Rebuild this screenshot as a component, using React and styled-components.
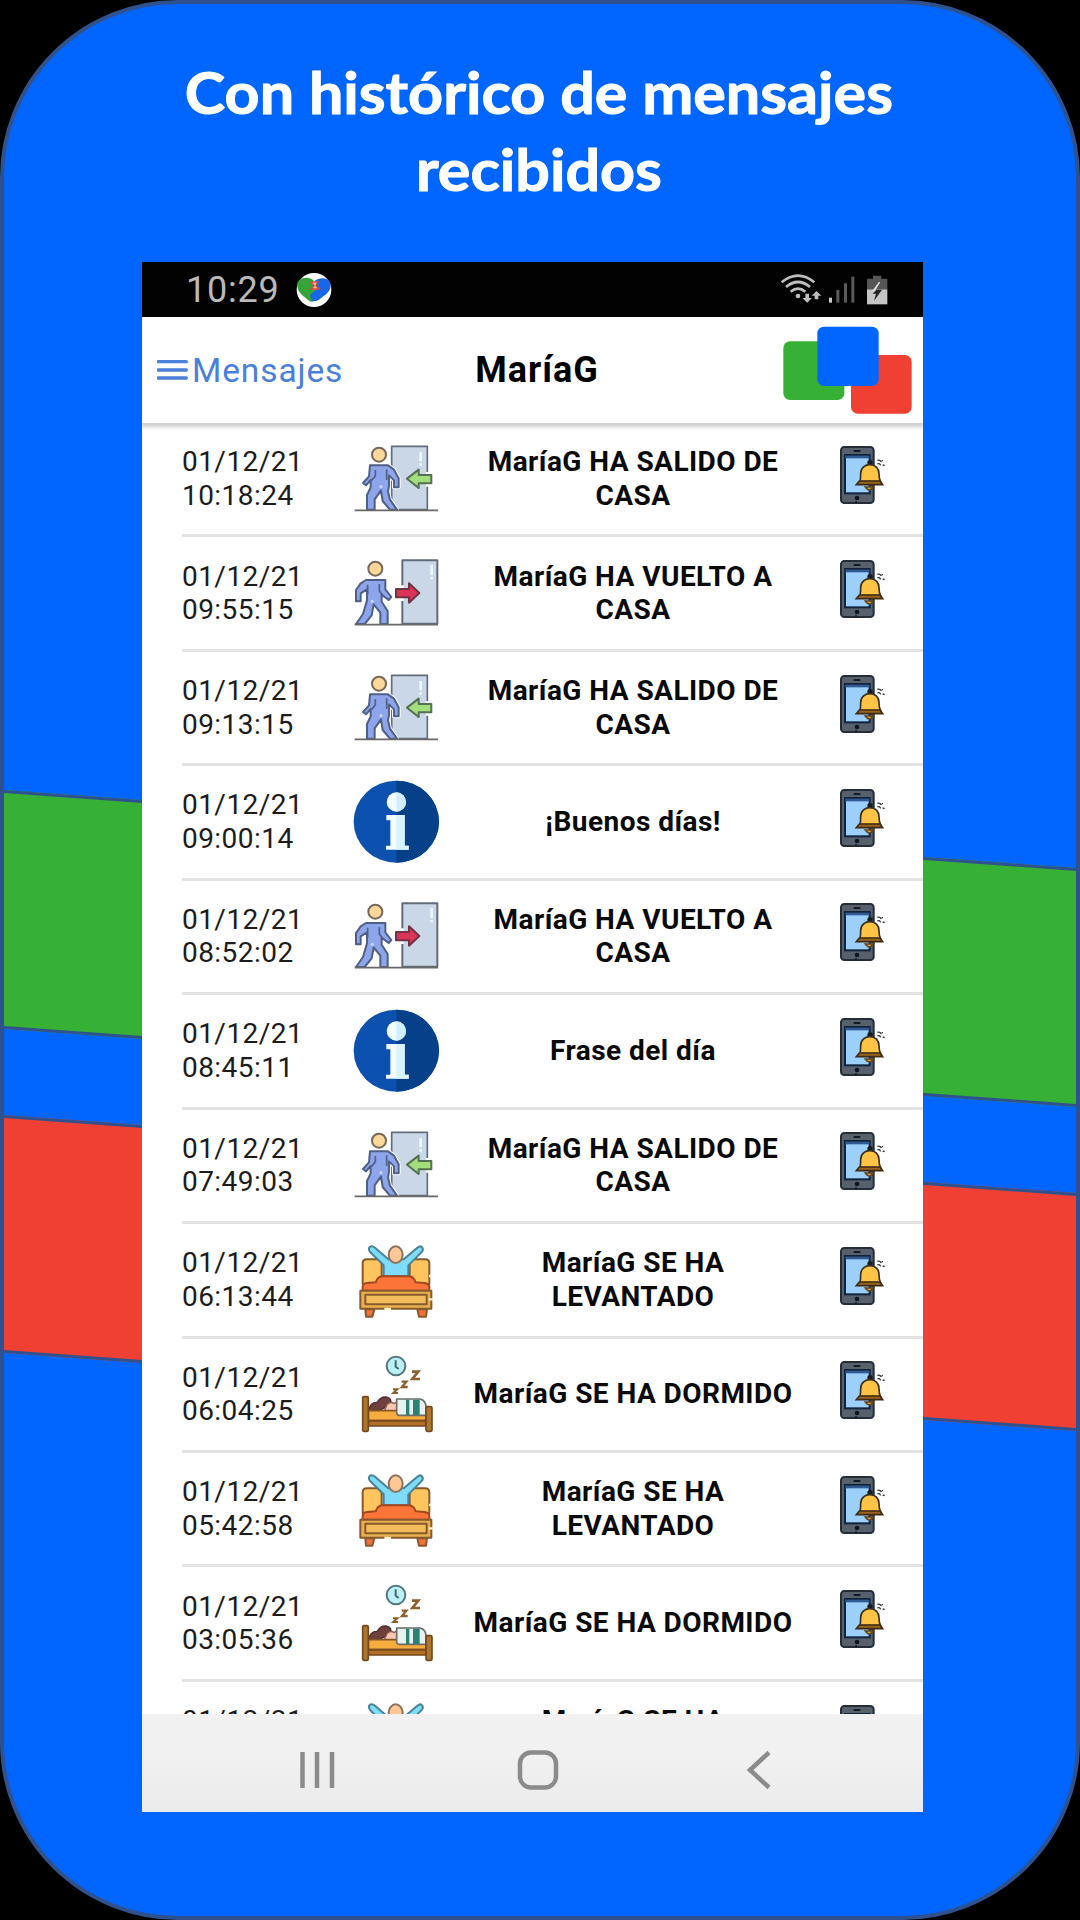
import React from "react"
import styled, { createGlobalStyle } from "styled-components"

const colors = {
  blue: "#0066ff",
  green: "#36b136",
  red: "#f04034",
  outline: "#2f528f",
  link: "#4a7fdc"
}

const GlobalStyle = createGlobalStyle`
  * {
    box-sizing: border-box;
  }
  body {
    margin: 0;
    background: #000;
    font-family: Roboto, "Liberation Sans", sans-serif;
  }
  svg {
    display: block;
    flex-shrink: 0;
  }
`

const Poster = styled.main`
  position: relative;
  width: 1080px;
  height: 1920px;
  overflow: hidden;
  display: flex;
  flex-direction: column;
  border: 4px solid ${colors.outline};
  border-radius: 178px;
  background: ${colors.blue};
`

// slanted stripe that runs behind the phone
const Stripe = styled.div`
  position: absolute;
  left: -4px;
  right: -4px;
  top: ${props => props.top};
  height: ${props => props.height};
  border: solid ${colors.outline};
  border-width: 3.5px 0;
  background: ${props => props.color};
  transform: skewY(4.16deg);
`

const Headline = styled.h1`
  height: 258px;
  margin: 0;
  padding: 50px 150px 0 148px;
  color: #fff;
  font-family: Lato, "Open Sans", sans-serif;
  font-size: 56.5px;
  font-weight: 700;
  line-height: 76.5px;
  text-align: center;
  transform: scaleX(1.08);
  -webkit-text-stroke: 1px #fff;
`

const Phone = styled.section`
  position: relative;
  width: 781px;
  height: 1550px;
  margin-left: 138px;
  display: flex;
  flex-direction: column;
  overflow: hidden;
  background: #fff;
`

const StatusBar = styled.div`
  height: 55px;
  padding: 0 30px 0 44px;
  display: flex;
  align-items: center;
  background: #020202;
  color: #b9b9b9;
  font-size: 36px;
`

const Clock = styled.span`
  width: 110px;
  letter-spacing: 0.8px;
`

const Spacer = styled.div`
  flex: 1;
`

const Header = styled.header`
  position: relative;
  z-index: 1;
  height: 106px;
  padding: 0 11px 0 15px;
  display: grid;
  grid-template-columns: 1fr auto 1fr;
  align-items: center;
  background: #fff;
  box-shadow: 0 3px 4px 1px rgba(0, 0, 0, 0.2);
`

const MenuButton = styled.div`
  display: flex;
  align-items: center;
  gap: 4px;
  color: ${colors.link};
  font-size: 33.5px;
  letter-spacing: 0.9px;
`

const Title = styled.h2`
  margin: 0;
  padding-left: 5px;
  font-size: 36px;
  font-weight: 700;
  letter-spacing: 1px;
`

const LogoBox = styled.div`
  justify-self: end;
`

const List = styled.div`
  flex: 1;
  min-height: 0;
  overflow: hidden;
`

const Row = styled.div`
  height: 114.45px;
  margin: 0 0 0 40px;
  display: flex;
  align-items: center;
  border-bottom: 3px solid #e3e3e3;
  font-size: 28px;
  line-height: 33.6px;
  letter-spacing: 0.45px;
`

const Stamp = styled.div`
  width: 169px;
  color: #1c1c1c;
`

const Message = styled.div`
  width: 340px;
  margin: 0 35px 0 22px;
  color: #0a0a0a;
  font-weight: 700;
  text-align: center;
`

const Device = styled.div`
  margin-top: -10px;
`

const NavBar = styled.nav`
  height: 98px;
  padding: 14px 0 0 65px;
  display: flex;
  align-items: center;
  background: linear-gradient(#f1f1f1 40%, #ebebeb);
`

const NavItem = styled.div`
  width: 220.7px;
  display: flex;
  justify-content: center;
`

function AppBadge() {
  return (
    <svg width="36" height="36" viewBox="496 47 108 108">
      <ellipse cx="550" cy="101" rx="52" ry="51" fill="#fff" />
      <path
        d="M548 72C538 62 510 60 501 78C496 94 506 112 524 124C532 130 538 138 546 136L554 100Z"
        fill="#35a53a"
      />
      <path
        d="M552 74C566 62 590 62 598 78C604 98 592 110 578 120C568 128 560 138 544 134L538 116L556 100Z"
        fill="#1668e8"
      />
      <path
        d="M540 78L562 76L556 88L566 98L540 98L550 88Z"
        fill="#e9b9a0"
        stroke="#d5473c"
        strokeWidth="4"
      />
    </svg>
  )
}

function StatusIcons() {
  return (
    <svg width="114" height="40" viewBox="750 41 342 120" fill="none">
      <g stroke="#bdbdbd" strokeWidth="8">
        <path d="M758 78Q807 38 856 78" />
        <path d="M771 92Q807 62 843 92" />
        <path d="M785 106Q807 88 829 106" />
      </g>
      <circle cx="807" cy="119" r="7" fill="#bdbdbd" />
      <path
        d="M829 112h11v13h9l-14.500 14l-14.500 -14h9zM857 129h11v-11h9l-14.500 -14l-14.500 14h9z"
        fill="#bdbdbd"
      />
      <rect x="900" y="124" width="9" height="15" fill="#c9c9c9" />
      <rect x="922" y="101" width="9" height="38" fill="#5a5a5a" />
      <rect x="945" y="81" width="9" height="58" fill="#5a5a5a" />
      <rect x="967" y="61" width="9" height="78" fill="#5a5a5a" />
      <path d="M1032 58h25v9h18v32h-61v-32h18z" fill="#555" />
      <rect x="1014" y="99" width="61" height="45" fill="#c6c6c6" />
      <path d="M1050 76L1029 105H1043L1040 100L1054 78Z" fill="#ddd" />
      <path d="M1042 100H1059L1035 134L1041 112H1031Z" fill="#222" />
    </svg>
  )
}

function MenuIcon() {
  return (
    <svg width="31" height="24" viewBox="80 309 93 72" stroke={colors.link} strokeWidth="10">
      <path d="M84 320H168M84 345H168M84 369H168" strokeLinecap="round" />
    </svg>
  )
}

function Logo() {
  return (
    <svg width="129" height="88" viewBox="758 212 387 264">
      <rect x="759" y="258" width="183" height="176" rx="20" fill={colors.green} />
      <rect x="962" y="299" width="182" height="176" rx="20" fill={colors.red} />
      <rect x="861" y="214" width="184" height="178" rx="20" fill={colors.blue} />
    </svg>
  )
}

const Icon = styled.svg.attrs({ width: 90, height: 96, fill: "none" })`
  stroke-linejoin: round;
`

function LeaveIcon() {
  return (
    <Icon viewBox="573 33 270 288">
      <rect x="695" y="79" width="107" height="190" fill="#c9d7e7" stroke="#626c7c" strokeWidth="5" />
      <path d="M782 96V124M782 130V137" stroke="#eef7ff" strokeWidth="8" />
      <path
        d="M630 136H684L702 149L716 175V202H702V181L687 166V198L684 214L690 239L711 269H690L668 243L663 211L644 238V269H621V225L632 202V180L618 196L609 189L627 169Z"
        fill="#8da5ea"
        stroke="#fff"
        strokeWidth="12"
      />
      <path
        d="M630 136H684L702 149L716 175V202H702V181L687 166V198L684 214L690 239L711 269H690L668 243L663 211L644 238V269H621V225L632 202V180L618 196L609 189L627 169Z"
        fill="#8da5ea"
        stroke="#505f86"
        strokeWidth="6"
      />
      <path d="M646 150V168L634 182M680 148V180" stroke="#505f86" strokeWidth="5" />
      <circle cx="663" cy="200" r="5" fill="#c5d6ff" />
      <circle cx="657" cy="104" r="21" fill="#ffd79a" stroke="#77685c" strokeWidth="6" />
      <path d="M802 156V200" stroke="#fff" strokeWidth="9" />
      <path d="M741 176L776 149V165H814V190H776V204Z" fill="#a2df7c" stroke="#547052" strokeWidth="6" />
      <path d="M584 271H834" stroke="#686868" strokeWidth="5" />
    </Icon>
  )
}

function ReturnIcon() {
  return (
    <Icon viewBox="573 377 270 288">
      <rect x="727" y="423" width="105" height="190" fill="#c9d7e7" stroke="#626c7c" strokeWidth="6" />
      <path d="M815 437V467M815 473V480" stroke="#eef7ff" strokeWidth="8" />
      <path
        d="M618 482H676V510L694 533L686 542L665 526V547L683 575V614H661V580L641 555L635 588L614 614H588L609 584L621 543V510L602 522V546H588V512L602 492Z"
        fill="#8da5ea"
        stroke="#505f86"
        strokeWidth="6"
      />
      <path d="M623 496V526M658 494V515L667 527" stroke="#505f86" strokeWidth="5" />
      <circle cx="637" cy="546" r="5" fill="#c5d6ff" />
      <circle cx="646" cy="448" r="21" fill="#ffd79a" stroke="#77685c" strokeWidth="6" />
      <path d="M727 498V545" stroke="#fff" strokeWidth="9" />
      <path d="M708 509H747V492L778 521L747 550V534H708Z" fill="#da3556" stroke="#703345" strokeWidth="6" />
      <path d="M584 616H834" stroke="#686868" strokeWidth="5" />
    </Icon>
  )
}

function InfoIcon() {
  return (
    <Icon viewBox="33 44 270 288">
      <ellipse cx="169" cy="187" rx="128" ry="123" fill="#0c50b0" />
      <path d="M169 64A128 123 0 0 1 169 310Z" fill="#064089" />
      <circle cx="169" cy="128" r="29" fill="#f2fdff" />
      <path d="M169 99A29 29 0 0 1 169 157Z" fill="#cfeeff" />
      <path d="M139 167H194V259H206V271H138V259H151V183H139Z" fill="#f2fdff" />
      <path d="M169 167H194V259H206V271H169Z" fill="#d8f2ff" />
    </Icon>
  )
}

function WakeIcon() {
  return (
    <Icon viewBox="34 2 270 288" stroke="#87592d" strokeWidth="6">
      <path d="M69 158V96Q69 84 82 84H126V158ZM210 158V84H256Q269 84 269 96V158Z" fill="#fec45d" />
      <path
        d="M132 135V102L92 63Q84 52 91 46Q98 42 106 49L146 84H192L233 49Q242 42 247 48Q253 55 245 63L206 102V135Z"
        fill="#7edcf8"
        stroke="#4a8396"
      />
      <ellipse cx="168" cy="70" rx="21" ry="25" fill="#ffc795" stroke="#8c7360" />
      <path
        d="M69 178V165Q70 156 82 155L108 153Q114 136 128 135H208Q222 136 228 153L254 155Q268 157 269 166V178Z"
        fill="#fc7438"
        stroke="#a4471f"
      />
      <path d="M77 234H104L98 256H79ZM233 234H262L259 256H238Z" fill="#f4713b" />
      <rect x="62" y="178" width="213" height="54" fill="#e8b04e" />
      <rect x="77" y="190" width="184" height="29" fill="#f4bd5c" />
      <path d="M134 233H154M267 204H281M268 134H274" stroke="#fff3cf" strokeWidth="7" />
    </Icon>
  )
}

function SleepIcon() {
  return (
    <Icon viewBox="33 349 270 288">
      <circle cx="168" cy="409" r="28" fill="#b9f1f6" stroke="#55777d" strokeWidth="6" />
      <path d="M167 392V411L176 418" stroke="#45656f" strokeWidth="6" />
      <g stroke="#8c602e" strokeWidth="8" strokeLinejoin="miter">
        <path d="M216 426H235L217 448H240" />
        <path d="M185 456H199L186 472H203" strokeWidth="7" />
        <path d="M159 479H172L160 490H174" strokeWidth="6" />
      </g>
      <path
        d="M86 543Q90 517 112 518Q120 502 136 502Q151 503 153 516Q142 520 137 532Q124 544 86 543Z"
        fill="#70403c"
        stroke="#4c302c"
        strokeWidth="4"
      />
      <path
        d="M134 541L141 525Q151 514 163 522L173 513V545H135Z"
        fill="#ffc7b2"
        stroke="#91604f"
        strokeWidth="4"
      />
      <rect x="85" y="543" width="173" height="29" fill="#f7ad3d" stroke="#87572a" strokeWidth="5" />
      <path
        d="M170 508H240Q258 512 258 532V557H178Q170 556 170 549Z"
        fill="#e7f2ee"
        stroke="#6b6d68"
        strokeWidth="5"
      />
      <path d="M198 510H208V556H198ZM219 510H239V556H219Z" fill="#2b8173" />
      <rect x="85" y="574" width="173" height="15" fill="#b27026" stroke="#76481e" strokeWidth="5" />
      <rect x="68" y="501" width="17" height="104" rx="4" fill="#ad762e" stroke="#76481e" strokeWidth="5" />
      <rect x="258" y="531" width="18" height="74" rx="4" fill="#ad762e" stroke="#76481e" strokeWidth="5" />
    </Icon>
  )
}

function PhoneBell() {
  return (
    <svg width="48" height="60" viewBox="954 71 144 180" fill="none">
      <rect x="963" y="80" width="98" height="168" rx="10" fill="#56616d" stroke="#252d39" strokeWidth="6" />
      <rect x="975" y="104" width="74" height="115" fill="#9dcffb" stroke="#12233c" strokeWidth="6" />
      <path d="M976 110H1048" stroke="#305a92" strokeWidth="8" />
      <path d="M1001 92H1021" stroke="#141a22" strokeWidth="6" />
      <circle cx="1011" cy="233" r="7" fill="#10161f" />
      <path d="M1008 242V249" stroke="#10161f" strokeWidth="4" />
      <path d="M1036 200Q1048 218 1060 200Z" fill="#e9a32f" stroke="#5f4522" strokeWidth="5" />
      <circle cx="1050" cy="127" r="8" fill="#171b22" />
      <path
        d="M1020 184Q1022 175 1022 160C1022 142 1036 133 1050 133C1066 133 1077 144 1077 160Q1077 176 1082 184Z"
        fill="#ffc446"
        stroke="#39301f"
        strokeWidth="5"
      />
      <path d="M1018 182H1080L1088 193H1009Z" fill="#9b641c" stroke="#3f2b16" strokeWidth="5" />
      <path
        d="M1072 120Q1080 117 1084 125M1072 131Q1078 127 1082 135M1087 119V123M1088 134L1094 136"
        stroke="#3a3a3a"
        strokeWidth="4"
      />
    </svg>
  )
}

const kinds = {
  leave: { icon: LeaveIcon, text: "MaríaG HA SALIDO DE CASA" },
  back: { icon: ReturnIcon, text: "MaríaG HA VUELTO A CASA" },
  hello: { icon: InfoIcon, text: "¡Buenos días!" },
  quote: { icon: InfoIcon, text: "Frase del día" },
  wake: { icon: WakeIcon, text: "MaríaG SE HA LEVANTADO" },
  sleep: { icon: SleepIcon, text: "MaríaG SE HA DORMIDO" }
}

const messages = [
  { time: "10:18:24", kind: "leave" },
  { time: "09:55:15", kind: "back" },
  { time: "09:13:15", kind: "leave" },
  { time: "09:00:14", kind: "hello" },
  { time: "08:52:02", kind: "back" },
  { time: "08:45:11", kind: "quote" },
  { time: "07:49:03", kind: "leave" },
  { time: "06:13:44", kind: "wake" },
  { time: "06:04:25", kind: "sleep" },
  { time: "05:42:58", kind: "wake" },
  { time: "03:05:36", kind: "sleep" },
  { time: "\u00a0", kind: "wake" }
]

function MessageRow({ time, kind }) {
  const { icon: KindIcon, text } = kinds[kind]
  return (
    <Row>
      <Stamp>
        01/12/21
        <br />
        {time}
      </Stamp>
      <KindIcon />
      <Message>{text}</Message>
      <Device>
        <PhoneBell />
      </Device>
    </Row>
  )
}

export default function App() {
  return (
    <>
      <GlobalStyle />
      <Poster>
        <Stripe top="825px" height="239px" color={colors.green} />
        <Stripe top="1149.5px" height="238px" color={colors.red} />
        <Headline>Con histórico de mensajes recibidos</Headline>
        <Phone>
          <StatusBar>
            <Clock>10:29</Clock>
            <AppBadge />
            <Spacer />
            <StatusIcons />
          </StatusBar>
          <Header>
            <MenuButton>
              <MenuIcon />
              Mensajes
            </MenuButton>
            <Title>MaríaG</Title>
            <LogoBox>
              <Logo />
            </LogoBox>
          </Header>
          <List>
            {messages.map(m => (
              <MessageRow key={m.time} {...m} />
            ))}
          </List>
          <NavBar>
            <NavItem>
              <svg width="36" height="40" stroke="#8b8b8b" strokeWidth="4.500">
                <path d="M3.500 2V38M18 2V38M33 2V38" />
              </svg>
            </NavItem>
            <NavItem>
              <svg width="42" height="42" fill="none" stroke="#8b8b8b" strokeWidth="4.500">
                <rect x="3" y="3.500" width="36" height="35" rx="11" />
              </svg>
            </NavItem>
            <NavItem>
              <svg width="26" height="40" fill="none" stroke="#8b8b8b" strokeWidth="4.500">
                <path d="M23 2.500L4 20L23 37.500" />
              </svg>
            </NavItem>
          </NavBar>
        </Phone>
      </Poster>
    </>
  )
}
